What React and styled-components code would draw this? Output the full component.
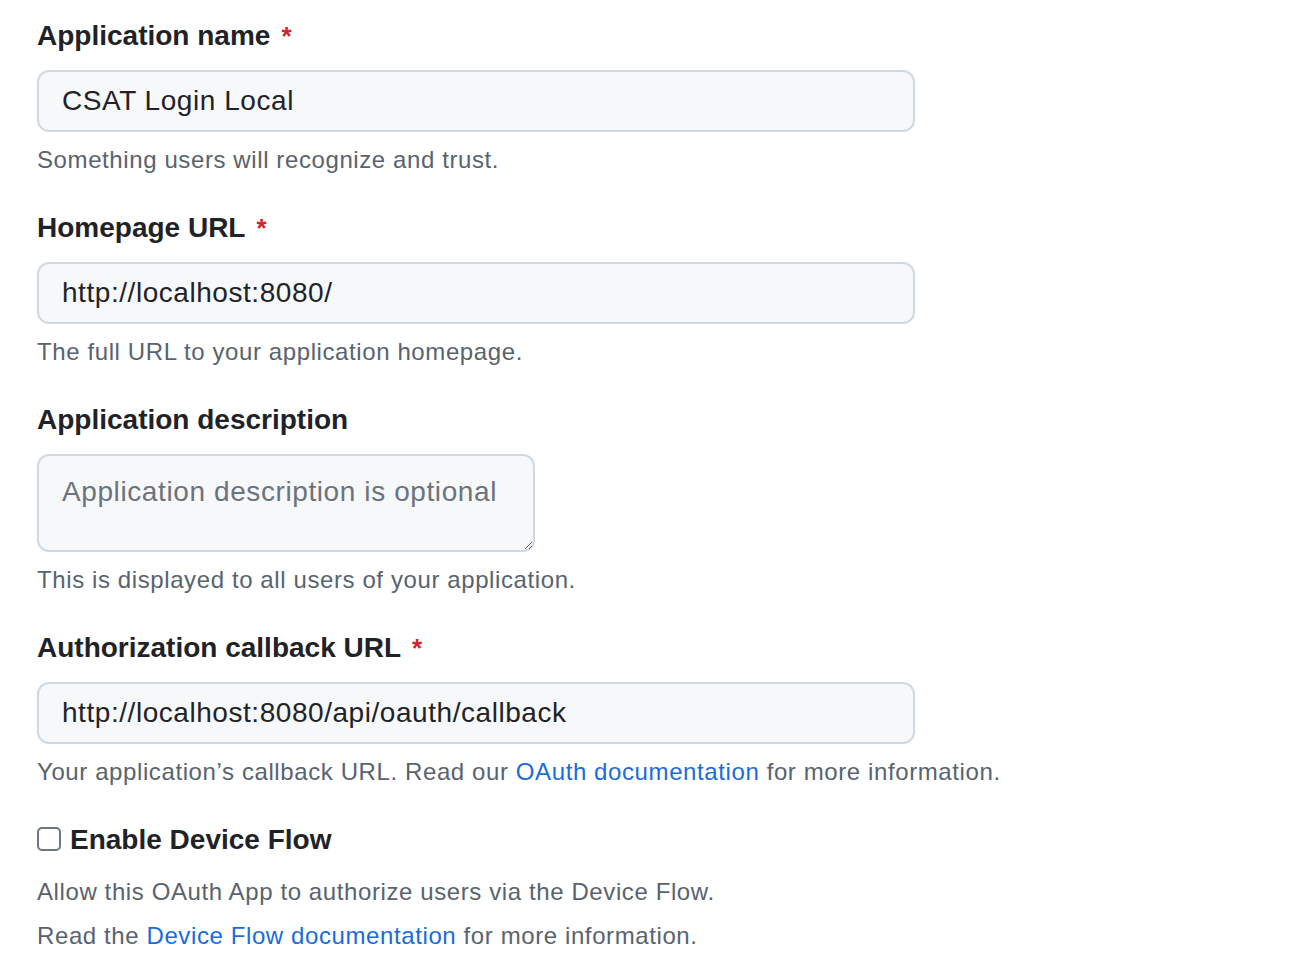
import React from "react"
import styled, { createGlobalStyle } from "styled-components"

const GlobalStyle = createGlobalStyle`
  html, body {
    margin: 0;
    padding: 0;
    background: #ffffff;
  }
  body {
    font-family: "Liberation Sans", Arial, sans-serif;
    color: #1f2328;
  }
`

const Form = styled.form`
  display: flex;
  flex-direction: column;
  padding: 18px 0 0 37px;
  width: 1100px;
`

const Field = styled.div`
  display: flex;
  flex-direction: column;
  align-items: flex-start;
  margin-bottom: 32px;
`

const Label = styled.label`
  font-size: 28px;
  font-weight: 700;
  line-height: 36px;
  color: #1f2328;
  margin-bottom: 16px;
`

const Required = styled.span`
  color: #d1242f;
  font-size: 26px;
  margin-left: 11px;
`

const Input = styled.input`
  box-sizing: border-box;
  width: 878px;
  height: 62px;
  padding: 0 23px;
  border: 2px solid #d1d9e0;
  border-radius: 12px;
  background: #f6f8fa;
  font-family: inherit;
  font-size: 28px;
  letter-spacing: 0.55px;
  color: #1f2328;
  outline: none;
`

const TextArea = styled.textarea`
  box-sizing: border-box;
  width: 498px;
  height: 98px;
  padding: 18px 23px;
  border: 2px solid #d1d9e0;
  border-radius: 12px;
  background: #f6f8fa;
  font-family: inherit;
  font-size: 28px;
  letter-spacing: 0.6px;
  line-height: 36px;
  color: #1f2328;
  resize: both;
  outline: none;

  &::placeholder {
    color: #6b737c;
  }
`

const Note = styled.p`
  margin: ${({ $top }) => $top ?? 10}px 0 0;
  font-size: 24px;
  line-height: 36px;
  letter-spacing: 0.6px;
  color: #59636e;
`

const Link = styled.a`
  color: #1a6bdc;
  text-decoration: none;
`

const CheckRow = styled.label`
  display: flex;
  align-items: center;
  gap: 9px;
  font-size: 28px;
  font-weight: 700;
  line-height: 36px;
  color: #1f2328;
`

const Box = styled.span`
  box-sizing: border-box;
  width: 24px;
  height: 24px;
  border: 2px solid #6e7781;
  border-radius: 5px;
  background: #ffffff;
  margin-top: -2px;
`

const App = () => {
  return (
    <>
      <GlobalStyle />
      <Form onSubmit={(e) => e.preventDefault()}>
        <Field>
          <Label>
            Application name<Required>*</Required>
          </Label>
          <Input defaultValue="CSAT Login Local" />
          <Note>Something users will recognize and trust.</Note>
        </Field>

        <Field>
          <Label>
            Homepage URL<Required>*</Required>
          </Label>
          <Input defaultValue="http://localhost:8080/" />
          <Note>The full URL to your application homepage.</Note>
        </Field>

        <Field>
          <Label>Application description</Label>
          <TextArea placeholder="Application description is optional" />
          <Note>This is displayed to all users of your application.</Note>
        </Field>

        <Field>
          <Label>
            Authorization callback URL<Required>*</Required>
          </Label>
          <Input defaultValue="http://localhost:8080/api/oauth/callback" />
          <Note>
            Your application’s callback URL. Read our{" "}
            <Link href="#">OAuth documentation</Link> for more information.
          </Note>
        </Field>

        <CheckRow>
          <Box />
          Enable Device Flow
        </CheckRow>
        <Note $top={16}>Allow this OAuth App to authorize users via the Device Flow.</Note>
        <Note $top={8}>
          Read the <Link href="#">Device Flow documentation</Link> for more information.
        </Note>
      </Form>
    </>
  )
}

export default App
